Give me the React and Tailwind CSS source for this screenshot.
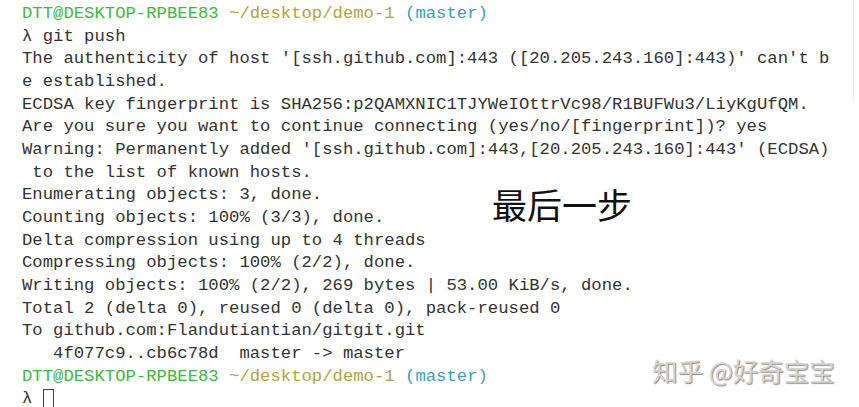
import React from 'react'

const Prompt = () => (
  <div>
    <span className="text-[#3db83d]">DTT@DESKTOP-RPBEE83</span>{' '}
    <span className="text-[#aea63a]">~/desktop/demo-1</span>{' '}
    <span className="text-[#3a9fb5]">(master)</span>
  </div>
)

const output = [
  "The authenticity of host '[ssh.github.com]:443 ([20.205.243.160]:443)' can't b",
  'e established.',
  'ECDSA key fingerprint is SHA256:p2QAMXNIC1TJYWeIOttrVc98/R1BUFWu3/LiyKgUfQM.',
  'Are you sure you want to continue connecting (yes/no/[fingerprint])? yes',
  "Warning: Permanently added '[ssh.github.com]:443,[20.205.243.160]:443' (ECDSA)",
  ' to the list of known hosts.',
  'Enumerating objects: 3, done.',
  'Counting objects: 100% (3/3), done.',
  'Delta compression using up to 4 threads',
  'Compressing objects: 100% (2/2), done.',
  'Writing objects: 100% (2/2), 269 bytes | 53.00 KiB/s, done.',
  'Total 2 (delta 0), reused 0 (delta 0), pack-reused 0',
  'To github.com:Flandutiantian/gitgit.git',
  '   4f077c9..cb6c78d  master -> master',
]

export default function App() {
  return (
    <div className="relative w-[859px] h-[407px] overflow-hidden bg-white">
      <div className="pl-[22px] pt-[3px] text-[17.25px] leading-[22.65px] text-[#333] whitespace-pre font-['Liberation_Mono','DejaVu_Sans_Mono',monospace]">
        <Prompt />
        <div>λ git push</div>
        {output.map((line, i) => (
          <div key={i}>{line}</div>
        ))}
        <Prompt />
        <div className="flex items-center">
          {'λ '}
          <span className="inline-block w-[11px] h-[20px] border border-[#444]" />
        </div>
      </div>

      {/* faint window edge */}
      <div className="absolute left-[853px] top-0 w-px h-[100px] bg-[#eeeeee]" />

      <div className="absolute left-[492px] top-[186px] text-[35px] leading-none text-[#111] font-['Noto_Sans_CJK_SC',sans-serif]">
        最后一步
      </div>

      <div className="absolute left-[652px] top-[357px] text-[25.5px] leading-none text-[#d4d4d4] [text-shadow:1px_1px_1px_#8a8a8a] font-['Noto_Sans_CJK_SC',sans-serif]">
        知乎 @好奇宝宝
      </div>
    </div>
  )
}
